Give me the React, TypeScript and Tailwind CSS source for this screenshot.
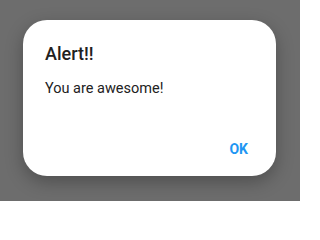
export default function App() {
  return (
    <div className="w-[300px] h-[201px] bg-[#6d6d6d] overflow-hidden" style={{ fontFamily: "Roboto, 'Liberation Sans', sans-serif" }}>
      <div className="ml-[23px] mt-[20px] w-[253px] h-[156px] bg-white rounded-[24px] shadow-[0_6px_18px_rgba(0,0,0,0.28)] flex flex-col pl-[22px] pt-[22px]">
        <div className="text-[18px] leading-[24px] font-medium text-[#212121]">Alert!!</div>
        <div className="mt-[11px] text-[14.5px] leading-[24px] text-[#222222]">You are awesome!</div>
        <div className="mt-auto mb-[17px] flex justify-end pr-[28px]">
          <span className="text-[14px] leading-[20px] font-bold text-[#2196f3]">OK</span>
        </div>
      </div>
    </div>
  );
}
